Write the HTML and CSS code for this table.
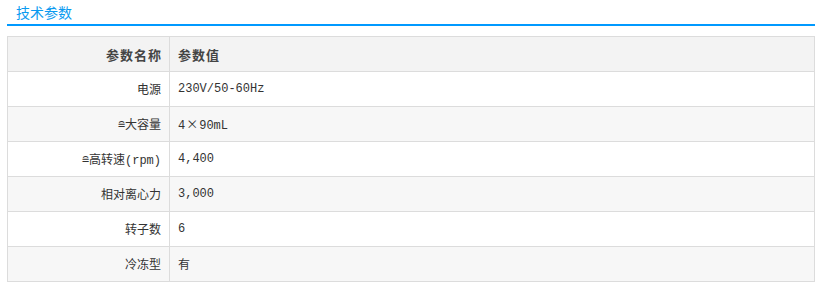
FILE: index.html
```html
<!DOCTYPE html>
<html lang="zh-CN">
<head>
<meta charset="utf-8">
<title>技术参数</title>
<link rel="stylesheet" href="styles.css">
</head>
<body>
<div class="wrap">
  <div class="title"><span>技术参数</span></div>
  <table class="params">
    <thead>
      <tr><th class="name">参数名称</th><th class="val">参数值</th></tr>
    </thead>
    <tbody>
      <tr><td class="name">电源</td><td class="val">230V/50-60Hz</td></tr>
      <tr><td class="name">≘大容量</td><td class="val">4<span class="cjk">×</span>90mL</td></tr>
      <tr><td class="name">≘高转速(rpm)</td><td class="val">4,400</td></tr>
      <tr><td class="name">相对离心力</td><td class="val">3,000</td></tr>
      <tr><td class="name">转子数</td><td class="val">6</td></tr>
      <tr><td class="name">冷冻型</td><td class="val">有</td></tr>
    </tbody>
  </table>
</div>
</body>
</html>
```

FILE: styles.css
```css
html, body {
  margin: 0;
  padding: 0;
  background: #fff;
}
.wrap {
  width: 808px;
  padding: 0 7px;
  font-family: "Noto Sans CJK SC", "Noto Sans", sans-serif;
}
.title {
  height: 26px;
  box-sizing: border-box;
  padding-left: 9px;
  border-bottom: 2px solid #0099ff;
}
.title span {
  display: block;
  font-size: 14px;
  line-height: 24px;
  color: #0a9af0;
}
.params {
  margin-top: 10px;
  width: 808px;
  border-collapse: collapse;
  font-size: 12px;
  color: #333;
}
.params th, .params td {
  border: 1px solid #dcdcdc;
  height: 35px;
  padding: 0 8px;
  box-sizing: border-box;
}
.params th {
  background: #f3f3f3;
  font-weight: bold;
  font-size: 13px;
  color: #444;
  letter-spacing: 1px;
}
.params .name {
  width: 162px;
  text-align: right;
}
.params td.name {
  font-family: "Liberation Mono", "Noto Sans CJK SC", monospace;
  letter-spacing: 0;
}
.params th.name { padding-right: 7px; }
.params .val {
  text-align: left;
}
.params td.val {
  font-family: "Liberation Mono", "Noto Sans CJK SC", monospace;
  font-size: 12px;
}
.params .cjk {
  font-family: "Noto Sans CJK SC", sans-serif;
  padding: 0 1px;
}
.params tbody tr:nth-child(even) td {
  background: #f7f7f7;
}
```
